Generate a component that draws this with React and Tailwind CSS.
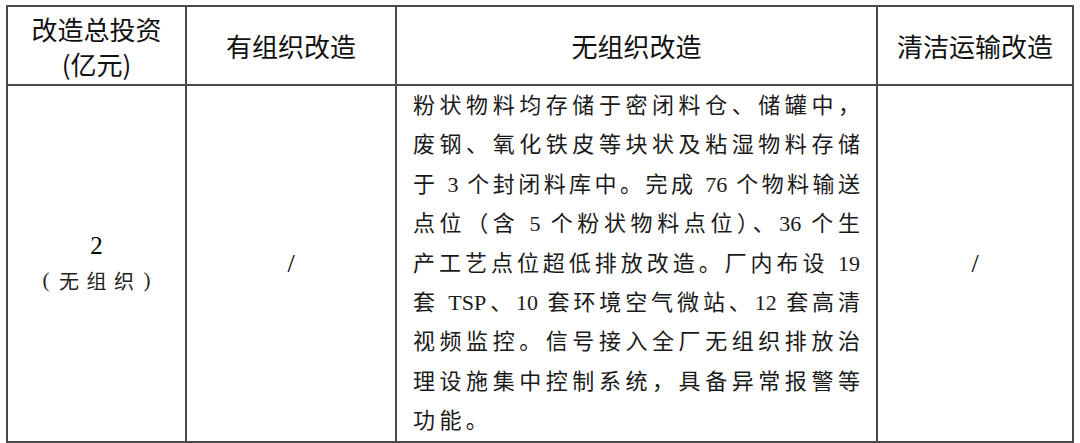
const bodyLines = [
  "粉状物料均存储于密闭料仓、储罐中，",
  "废钢、氧化铁皮等块状及粘湿物料存储",
  "于 3 个封闭料库中。完成 76 个物料输送",
  "点位（含 5 个粉状物料点位）、36 个生",
  "产工艺点位超低排放改造。厂内布设 19",
  "套 TSP、10 套环境空气微站、12 套高清",
  "视频监控。信号接入全厂无组织排放治",
  "理设施集中控制系统，具备异常报警等",
  "功能。",
];

const sans = "font-['Noto_Sans_CJK_SC',sans-serif]";
const serif = "font-['Liberation_Serif','Noto_Sans_CJK_SC',serif]";

export default function App() {
  return (
    <div className="h-[443px] w-[1080px] bg-white pl-[6px] pt-[5px] text-black">
      <table className="w-[1066px] table-fixed border-collapse">
        <colgroup>
          <col className="w-[179px]" />
          <col className="w-[210px]" />
          <col className="w-[481px]" />
          <col className="w-[196px]" />
        </colgroup>
        <thead>
          <tr className={`h-[79px] text-[26px] text-[#111] ${sans}`}>
            <th className="border-2 border-[#4a4a4a] text-center font-normal leading-[35px]">
              <div>改造总投资</div>
              <div>(亿元)</div>
            </th>
            <th className="border-2 border-[#4a4a4a] text-center font-normal">有组织改造</th>
            <th className="border-2 border-[#4a4a4a] text-center font-normal">无组织改造</th>
            <th className="border-2 border-[#4a4a4a] text-center font-normal">清洁运输改造</th>
          </tr>
        </thead>
        <tbody>
          <tr>
            <td className="border-2 border-[#4a4a4a] text-center align-middle">
              <div className={`text-[25px] leading-[35px] ${serif}`}>2</div>
              <div className={`flex justify-center text-[20px] leading-[35px] text-[#222] ${sans}`}>
                <span className={`w-[18.5px] text-center text-[21px] ${serif}`}>(</span>
                <span className="w-[27.5px] text-center">无</span>
                <span className="w-[27.5px] text-center">组</span>
                <span className="w-[27.5px] text-center">织</span>
                <span className={`w-[18.5px] text-center text-[21px] ${serif}`}>)</span>
              </div>
            </td>
            <td className={`border-2 border-[#4a4a4a] text-center align-middle text-[26px] ${serif}`}>
              /
            </td>
            <td className={`border-2 border-[#4a4a4a] px-[16px] text-[22px] leading-[39.4px] text-[#1a1a1a] ${serif}`}>
              {bodyLines.map((line, i) => (
                <div
                  key={i}
                  className={
                    i < bodyLines.length - 1
                      ? "text-justify [text-align-last:justify] whitespace-nowrap"
                      : "tracking-[4.4px]"
                  }
                >
                  {line}
                </div>
              ))}
            </td>
            <td className={`border-2 border-[#4a4a4a] text-center align-middle text-[26px] ${serif}`}>
              /
            </td>
          </tr>
        </tbody>
      </table>
    </div>
  );
}
